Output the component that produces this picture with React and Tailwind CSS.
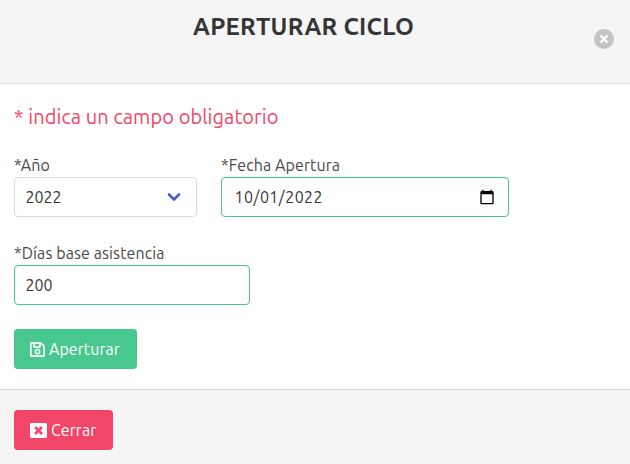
import React from "react";
import { FaRegSave, FaWindowClose } from "react-icons/fa";

function Field({ label, className, children }) {
  return (
    <div className={className}>
      <label className="block h-6 whitespace-nowrap leading-6 tracking-[0.1px] text-[#4a4a4a]">{label}</label>
      {children}
    </div>
  );
}

const control = "flex h-10 items-center rounded border bg-white text-[#363636] shadow-[inset_0_1px_2px_rgba(10,10,10,0.05)]";

export default function App() {
  return (
    <div className="flex h-[464px] w-[630px] flex-col overflow-hidden bg-white text-base font-['Ubuntu','Noto_Sans',sans-serif]">
      <header className="flex h-[84px] shrink-0 border-b border-[#dbdbdb] bg-[#f5f5f5] pr-4">
        <h1 className="ml-[193px] mt-[13px] w-[401px] whitespace-nowrap text-2xl font-bold leading-[27px] tracking-[0.26px] text-[#363636]">
          APERTURAR CICLO
        </h1>
        <button aria-label="Cerrar ventana" className="mt-[29px] size-5 shrink-0 rounded-full bg-[#c4c4c4]">
          <svg viewBox="0 0 20 20" className="size-5" fill="none" stroke="#fff" strokeWidth="2.2">
            <path d="M6.5 6.5l7 7M13.5 6.5l-7 7" />
          </svg>
        </button>
      </header>

      <main className="flex h-[305px] shrink-0 flex-col px-3.5">
        <p className="mt-[18px] h-[30px] whitespace-nowrap text-xl leading-[30px] tracking-[0.08px] text-[#f14668]">
          * indica un campo obligatorio
        </p>
        <div className="mt-[21px] flex gap-6">
          <Field label="*Año" className="w-[183px]">
            <div className="flex h-10 items-center justify-between rounded border border-[#dbdbdb] bg-white pl-[10.5px] pr-[15px] text-[#363636]">
              <span>2022</span>
              <svg viewBox="0 0 14 10" className="h-2.5 w-3.5" fill="none" stroke="#485fc7" strokeWidth="2.6" strokeLinecap="round" strokeLinejoin="round">
                <path d="M2 2.5l5 5 5-5" />
              </svg>
            </div>
          </Field>
          <Field label="*Fecha Apertura" className="w-[288px]">
            <div className={`${control} justify-between border-[#48c78e] pl-[12.6px] pr-[13px]`}>
              <span className="tracking-[0.45px]">10/01/2022</span>
              <svg viewBox="0 0 24 24" className="size-4">
                <path d="M20 3h-1V1h-2v2H7V1H5v2H4c-1.1 0-2 .9-2 2v16c0 1.1.9 2 2 2h16c1.1 0 2-.9 2-2V5c0-1.1-.9-2-2-2zm0 18H4V8h16v13z" />
              </svg>
            </div>
          </Field>
        </div>
        <Field label="*Días base asistencia" className="mt-6 w-[236px]">
          <div className={`${control} border-[#48c78e] pl-[10.5px]`}>
            <span>200</span>
          </div>
        </Field>
        <button className="mt-6 flex h-10 w-[123px] shrink-0 items-center rounded bg-[#48c78e] pl-4 text-white">
          <FaRegSave className="h-[17px] w-[15px] shrink-0" />
          <span className="ml-1 tracking-[0.05px]">Aperturar</span>
        </button>
      </main>

      <footer className="h-[75px] shrink-0 border-t border-[#dbdbdb] bg-[#f5f5f5] px-3.5 pt-5">
        <button className="flex h-10 w-[99px] items-center rounded bg-[#f14668] pl-4 text-white">
          <FaWindowClose className="size-[17px] shrink-0" />
          <span className="ml-1 tracking-[0.05px]">Cerrar</span>
        </button>
      </footer>
    </div>
  );
}
